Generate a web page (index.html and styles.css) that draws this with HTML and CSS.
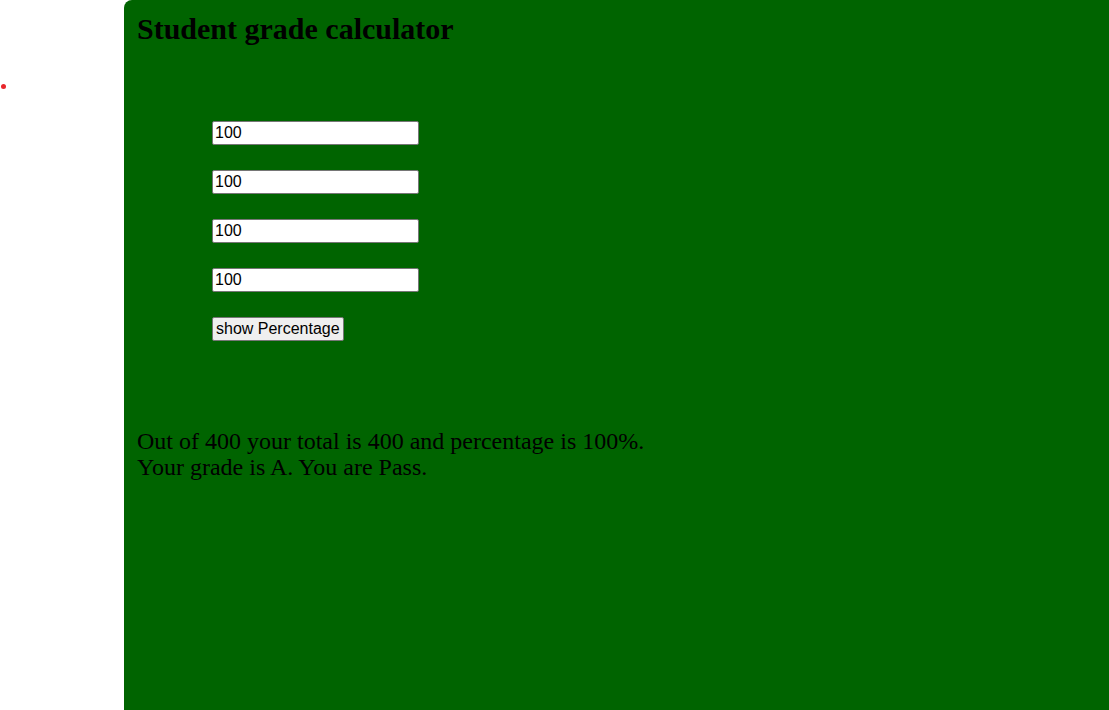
FILE: index.html
```html
<!DOCTYPE html>
<html>
<head>
<meta charset="utf-8">
<link rel="stylesheet" href="styles.css">
</head>
<body>
<div class="page">
  <div class="side"><span class="dot"></span></div>
  <main class="panel">
    <h1 class="title">Student grade calculator</h1>
    <form class="form">
      <input class="field" type="text" value="100">
      <input class="field" type="text" value="100">
      <input class="field" type="text" value="100">
      <input class="field" type="text" value="100">
      <button class="btn" type="button">show Percentage</button>
    </form>
    <p class="result">Out of 400 your total is 400 and percentage is 100%.<br>Your grade is A. You are Pass.</p>
  </main>
</div>
</body>
</html>
```
FILE: styles.css
```css
html, body {
  margin: 0;
  padding: 0;
  background: #ffffff;
  overflow: hidden;
}
.page {
  display: flex;
  min-height: 710px;
}
.side {
  width: 124px;
  flex: none;
  padding-top: 84px;
  padding-left: 1px;
  box-sizing: border-box;
}
.dot {
  display: block;
  width: 5px;
  height: 5px;
  border-radius: 50%;
  background: #e8262b;
}
.panel {
  flex: 1;
  background: #006400;
  border-top-left-radius: 8px;
  padding: 0 12px 0 13px;
  min-height: 710px;
  box-sizing: border-box;
  font-family: "Liberation Serif", "Times New Roman", serif;
  color: #000;
}
.title {
  margin: 0;
  padding-top: 12px;
  font-size: 30px;
  font-weight: bold;
  line-height: 34px;
}
.form {
  display: flex;
  flex-direction: column;
  align-items: flex-start;
  gap: 25px;
  padding-left: 75px;
  margin-top: 75px;
}
.field {
  box-sizing: border-box;
  width: 207px;
  height: 24px;
  margin: 0;
  padding: 1px 2px;
  border: 1px solid #767676;
  border-radius: 2px;
  background: #fff;
  font-family: "Liberation Sans", Arial, sans-serif;
  font-size: 16px;
  color: #000;
}
.btn {
  box-sizing: border-box;
  height: 24px;
  margin: 0;
  padding: 1px 3px;
  border: 1px solid #767676;
  border-radius: 2px;
  background: #efefef;
  font-family: "Liberation Sans", Arial, sans-serif;
  font-size: 16px;
  color: #000;
}
.result {
  margin: 87px 0 0 0;
  font-size: 24px;
  line-height: 26px;
}
```
